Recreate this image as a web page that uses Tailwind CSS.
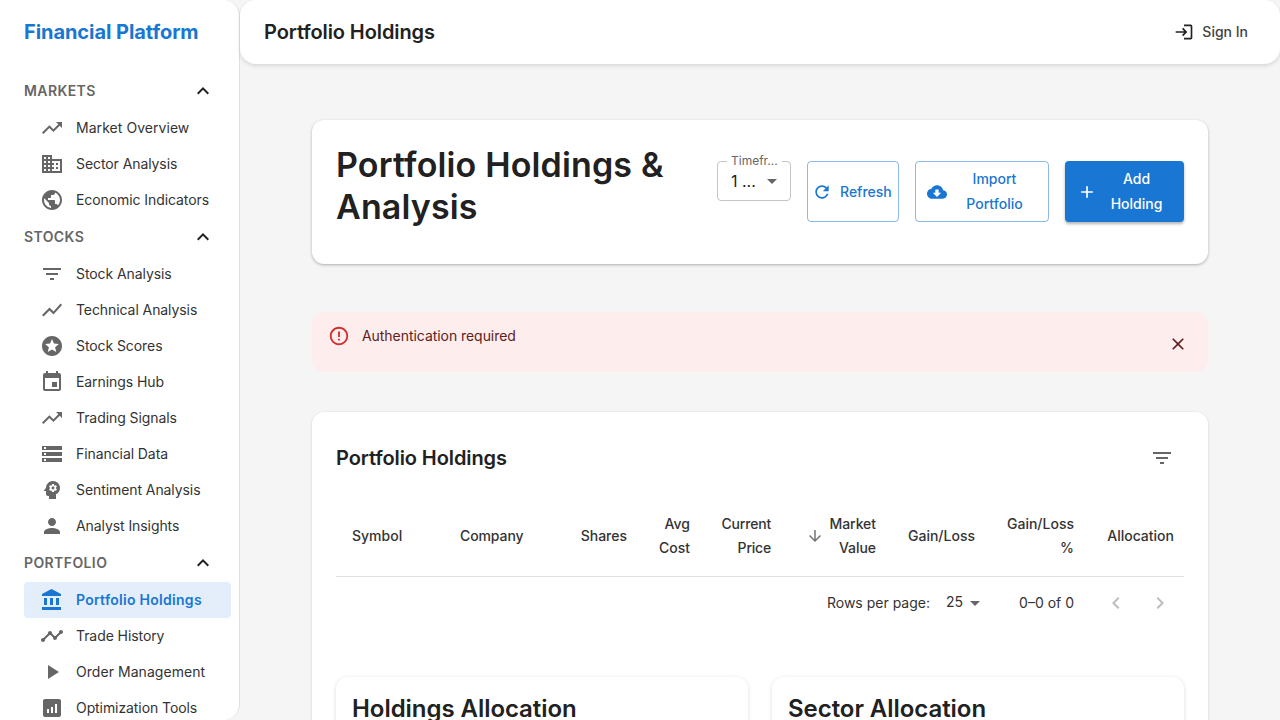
<!DOCTYPE html>
<html lang="en">
<head>
  <meta charset="UTF-8">
  <meta name="viewport" content="width=device-width, initial-scale=1.0">
  <title>Portfolio Holdings | Financial Platform</title>
  <script src="https://cdn.jsdelivr.net/npm/@tailwindcss/browser@4"></script>
</head>
<body class="bg-[#f5f5f5] h-screen overflow-hidden font-[Inter,sans-serif] text-[#212121]">
  <div class="flex h-screen overflow-hidden">
    <!-- Sidebar -->
    <aside class="w-[240px] shrink-0 h-[720px] bg-white rounded-r-2xl border-r border-[#e0e0e0] overflow-hidden">
      <div class="h-16 pl-6 flex items-center text-[20px] font-bold tracking-[-0.06px] text-[#1976d2]">Financial Platform</div>
      <nav class="mt-2 pl-6 pr-2 text-[14px] tracking-[-0.08px] text-[#333333]">
        <div class="h-[38px] flex items-center justify-between font-semibold tracking-[0.4px] text-[#666666]">
          <span class="mb-0.5">MARKETS</span>
          <svg class="w-6 h-6 mr-[16px] fill-[#212121]" viewBox="0 0 24 24"><path d="M12 8l-6 6 1.41 1.41L12 10.83l4.59 4.58L18 14z"/></svg>
        </div>
        <a class="h-9 flex items-center pl-4 gap-3 tracking-[0.05px]"><svg class="w-6 h-6 fill-[#666666]" viewBox="0 0 24 24"><path d="M16 6l2.29 2.29-4.88 4.88-4-4L2 16.59 3.41 18l6-6 4 4 6.3-6.29L22 12V6z"/></svg><span class="mb-0.5">Market Overview</span></a>
        <a class="h-9 flex items-center pl-4 gap-3"><svg class="w-6 h-6 fill-[#666666]" viewBox="0 0 24 24"><path d="M12 7V3H2v18h20V7H12zM6 19H4v-2h2v2zm0-4H4v-2h2v2zm0-4H4V9h2v2zm0-4H4V5h2v2zm4 12H8v-2h2v2zm0-4H8v-2h2v2zm0-4H8V9h2v2zm0-4H8V5h2v2zm10 12h-8v-2h2v-2h-2v-2h2v-2h-2V9h8v10zm-2-8h-2v2h2v-2zm0 4h-2v2h2v-2z"/></svg><span class="mb-0.5">Sector Analysis</span></a>
        <a class="h-9 flex items-center pl-4 gap-3"><svg class="w-6 h-6 fill-[#666666]" viewBox="0 0 24 24"><path d="M12 2C6.48 2 2 6.48 2 12s4.48 10 10 10 10-4.48 10-10S17.52 2 12 2zm-1 17.93c-3.95-.49-7-3.85-7-7.93 0-.62.08-1.21.21-1.79L9 15v1c0 1.1.9 2 2 2v1.93zm6.9-2.54c-.26-.81-1-1.39-1.9-1.39h-1v-3c0-.55-.45-1-1-1H8v-2h2c.55 0 1-.45 1-1V7h2c1.1 0 2-.9 2-2v-.41c2.93 1.19 5 4.06 5 7.41 0 2.08-.8 3.97-2.1 5.39z"/></svg><span class="mb-0.5">Economic Indicators</span></a>

        <div class="h-[38px] flex items-center justify-between font-semibold tracking-[0.4px] text-[#666666]">
          <span class="mb-0.5">STOCKS</span>
          <svg class="w-6 h-6 mr-[16px] fill-[#212121]" viewBox="0 0 24 24"><path d="M12 8l-6 6 1.41 1.41L12 10.83l4.59 4.58L18 14z"/></svg>
        </div>
        <a class="h-9 flex items-center pl-4 gap-3"><svg class="w-6 h-6 fill-[#666666]" viewBox="0 0 24 24"><path d="M10 18h4v-2h-4v2zM3 6v2h18V6H3zm3 7h12v-2H6v2z"/></svg><span class="mb-0.5">Stock Analysis</span></a>
        <a class="h-9 flex items-center pl-4 gap-3"><svg class="w-6 h-6 fill-[#666666]" viewBox="0 0 24 24"><path d="M3.5 18.49l6-6.01 4 4L22 6.92l-1.41-1.41-7.09 7.97-4-4L2 16.99z"/></svg><span class="mb-0.5">Technical Analysis</span></a>
        <a class="h-9 flex items-center pl-4 gap-3"><svg class="w-6 h-6 fill-[#666666]" viewBox="0 0 24 24"><path d="M11.99 2C6.47 2 2 6.48 2 12s4.47 10 9.99 10C17.52 22 22 17.52 22 12S17.52 2 11.99 2zm4.24 16L12 15.45 7.77 18l1.12-4.81-3.73-3.23 4.92-.42L12 5l1.92 4.53 4.92.42-3.73 3.23L16.23 18z"/></svg><span class="mb-0.5">Stock Scores</span></a>
        <a class="h-9 flex items-center pl-4 gap-3"><svg class="w-6 h-6 fill-[#666666]" viewBox="0 0 24 24"><path d="M17 12h-5v5h5v-5zM16 1v2H8V1H6v2H5c-1.11 0-1.99.9-1.99 2L3 19c0 1.1.89 2 2 2h14c1.1 0 2-.9 2-2V5c0-1.1-.9-2-2-2h-1V1h-2zm3 18H5V8h14v11z"/></svg><span class="mb-0.5">Earnings Hub</span></a>
        <a class="h-9 flex items-center pl-4 gap-3"><svg class="w-6 h-6 fill-[#666666]" viewBox="0 0 24 24"><path d="M16 6l2.29 2.29-4.88 4.88-4-4L2 16.59 3.41 18l6-6 4 4 6.3-6.29L22 12V6z"/></svg><span class="mb-0.5">Trading Signals</span></a>
        <a class="h-9 flex items-center pl-4 gap-3"><svg class="w-6 h-6 fill-[#666666]" viewBox="0 0 24 24"><path d="M2 20h20v-4H2v4zm2-3h2v2H4v-2zM2 4v4h20V4H2zm4 3H4V5h2v2zm-4 7h20v-4H2v4zm2-3h2v2H4v-2z"/></svg><span class="mb-0.5">Financial Data</span></a>
        <a class="h-9 flex items-center pl-4 gap-3"><svg class="w-6 h-6 fill-[#666666]" viewBox="0 0 24 24"><path d="M13 8.57c-.79 0-1.43.64-1.43 1.43s.64 1.43 1.43 1.43 1.43-.64 1.43-1.43-.64-1.43-1.43-1.43z"/><path d="M13 3C9.25 3 6.2 5.94 6.02 9.64L4.1 12.2c-.25.33-.01.8.4.8H6v3c0 1.1.9 2 2 2h1v3h7v-4.68c2.36-1.12 4-3.53 4-6.32 0-3.87-3.13-7-7-7zm3 7c0 .13-.01.26-.02.39l.83.66c.08.06.1.16.05.25l-.8 1.39c-.05.09-.16.12-.24.09l-.99-.4c-.21.16-.43.29-.67.39L14 13.83c-.01.1-.1.17-.2.17h-1.6c-.1 0-.18-.07-.2-.17l-.15-1.06c-.25-.1-.47-.23-.68-.39l-.99.4c-.09.03-.2 0-.25-.09l-.8-1.39c-.05-.08-.03-.19.05-.25l.84-.66c-.01-.13-.02-.26-.02-.39s.02-.27.04-.39l-.85-.66c-.08-.06-.1-.16-.05-.26l.8-1.38c.05-.09.15-.12.24-.09l1 .4c.2-.15.43-.29.67-.39l.15-1.06c.02-.1.1-.17.2-.17h1.6c.1 0 .18.07.2.17l.15 1.06c.24.1.46.23.67.39l1-.4c.09-.03.2 0 .24.09l.8 1.38c.05.09.03.2-.05.26l-.85.66c.03.12.04.25.04.39z"/></svg><span class="mb-0.5">Sentiment Analysis</span></a>
        <a class="h-9 flex items-center pl-4 gap-3"><svg class="w-6 h-6 fill-[#666666]" viewBox="0 0 24 24"><path d="M12 12c2.21 0 4-1.79 4-4s-1.79-4-4-4-4 1.79-4 4 1.79 4 4 4zm0 2c-2.67 0-8 1.34-8 4v2h16v-2c0-2.66-5.33-4-8-4z"/></svg><span class="mb-0.5">Analyst Insights</span></a>

        <div class="h-[38px] flex items-center justify-between font-semibold tracking-[0.4px] text-[#666666]">
          <span class="mb-0.5">PORTFOLIO</span>
          <svg class="w-6 h-6 mr-[16px] fill-[#212121]" viewBox="0 0 24 24"><path d="M12 8l-6 6 1.41 1.41L12 10.83l4.59 4.58L18 14z"/></svg>
        </div>
        <a class="h-9 flex items-center pl-4 gap-3 font-semibold tracking-[0.28px] text-[#1976d2] bg-[#e3eefa] rounded"><svg class="w-6 h-6 fill-[#1976d2]" viewBox="0 0 24 24"><path d="M4 10v7h3v-7H4zm6 0v7h3v-7h-3zM2 22h19v-3H2v3zm14-12v7h3v-7h-3zm-4.5-9L2 6v2h19V6l-9.5-5z"/></svg><span class="mb-0.5">Portfolio Holdings</span></a>
        <a class="h-9 flex items-center pl-4 gap-3"><svg class="w-6 h-6 fill-[#666666]" viewBox="0 0 24 24"><path d="M23 8c0 1.1-.9 2-2 2-.18 0-.35-.02-.51-.07l-3.56 3.55c.05.16.07.34.07.52 0 1.1-.9 2-2 2s-2-.9-2-2c0-.18.02-.36.07-.52l-2.55-2.55c-.16.05-.34.07-.52.07s-.36-.02-.52-.07l-4.55 4.56c.05.16.07.33.07.51 0 1.1-.9 2-2 2s-2-.9-2-2 .9-2 2-2c.18 0 .35.02.51.07l4.56-4.55C8.02 9.36 8 9.18 8 9c0-1.1.9-2 2-2s2 .9 2 2c0 .18-.02.36-.07.52l2.55 2.55c.16-.05.34-.07.52-.07s.36.02.52.07l3.55-3.56C19.02 8.35 19 8.18 19 8c0-1.1.9-2 2-2s2 .9 2 2z"/></svg><span class="mb-0.5">Trade History</span></a>
        <a class="h-9 flex items-center pl-4 gap-3 tracking-[0.05px]"><svg class="w-6 h-6 fill-[#666666]" viewBox="0 0 24 24"><path d="M8 5v14l11-7z"/></svg><span class="mb-0.5">Order Management</span></a>
        <a class="h-9 flex items-center pl-4 gap-3"><svg class="w-6 h-6 fill-[#666666]" viewBox="0 0 24 24"><path d="M19 3H5c-1.1 0-2 .9-2 2v14c0 1.1.9 2 2 2h14c1.1 0 2-.9 2-2V5c0-1.1-.9-2-2-2zM9 17H7v-4h2v4zm4 0h-2v-6h2v6zm4 0h-2V8h2v9z"/></svg><span class="mb-0.5">Optimization Tools</span></a>
      </nav>
    </aside>

    <div class="w-[1040px] h-[720px] flex flex-col">
      <!-- Top bar -->
      <header class="h-16 shrink-0 bg-white rounded-2xl shadow-[0_2px_4px_rgba(0,0,0,0.12)] flex items-center justify-between pl-6 pr-8">
        <div class="text-[20px] font-semibold tracking-[-0.1px]">Portfolio Holdings</div>
        <div class="flex items-center gap-2 text-[14px] font-medium text-[#424242]">
          <svg class="w-5 h-5 fill-[#212121]" viewBox="0 0 24 24"><path d="M11 7 9.6 8.4l2.6 2.6H2v2h10.2l-2.6 2.6L11 17l5-5-5-5zm9 12h-8v2h8c1.1 0 2-.9 2-2V5c0-1.1-.9-2-2-2h-8v2h8v14z"/></svg>
          <span class="mb-0.5">Sign In</span>
        </div>
      </header>

      <!-- Page content -->
      <main class="w-[896px] mx-auto pt-14">
        <section class="h-[144px] bg-white rounded-xl shadow-[0_1px_3px_rgba(0,0,0,0.3)] p-6 flex items-center justify-between">
          <h1 class="w-[381px] mb-3 text-[34px] leading-[42px] font-semibold tracking-[0.15px]">Portfolio Holdings &amp; Analysis</h1>
          <div class="flex items-start gap-4 mb-px text-[14px] font-medium leading-[25px]">
            <div class="relative w-[74px] h-10 border border-[#c4c4c4] rounded flex items-center justify-between pl-[13px] pr-[6px]">
              <span class="absolute left-[9px] top-[-8px] bg-white px-[4px] text-[12px] leading-[14px] font-normal text-[#666666]">Timefr...</span>
              <span class="text-[16px] font-normal">1 ...</span>
              <svg class="w-6 h-6 fill-[#666666]" viewBox="0 0 24 24"><path d="M7 10l5 5 5-5z"/></svg>
            </div>
            <button class="w-[92px] h-[61px] border border-[#1976d2]/50 rounded text-[#1976d2] flex items-center pl-[4px]">
              <svg class="w-5 h-5 mr-2 fill-[#1976d2]" viewBox="0 0 24 24"><path d="M17.65 6.35C16.2 4.9 14.21 4 12 4c-4.42 0-7.99 3.58-7.99 8s3.57 8 7.99 8c3.73 0 6.84-2.55 7.73-6h-2.08c-.82 2.33-3.04 4-5.65 4-3.31 0-6-2.69-6-6s2.69-6 6-6c1.66 0 3.14.69 4.22 1.78L13 11h7V4l-2.35 2.35z"/></svg>
              <span>Refresh</span>
            </button>
            <button class="w-[134px] h-[61px] border border-[#1976d2]/50 rounded text-[#1976d2] flex items-center pl-[11px] pr-[14px]">
              <svg class="w-5 h-5 mr-2 shrink-0 fill-[#1976d2]" viewBox="0 0 24 24"><path d="M19.35 10.04C18.67 6.59 15.64 4 12 4 9.11 4 6.6 5.64 5.35 8.04 2.34 8.36 0 10.91 0 14c0 3.31 2.69 6 6 6h13c2.76 0 5-2.24 5-5 0-2.64-2.05-4.78-4.65-4.96zM17 13l-5 5-5-5h3V9h4v4h3z"/></svg>
              <span class="flex-1 mb-0.5 text-center">Import Portfolio</span>
            </button>
            <button class="w-[119px] h-[61px] rounded bg-[#1976d2] text-white shadow-[0_2px_3px_rgba(0,0,0,0.3)] flex items-center pl-[12px] pr-[16px]">
              <svg class="w-5 h-5 mr-2 shrink-0 fill-white" viewBox="0 0 24 24"><path d="M19 13h-6v6h-2v-6H5v-2h6V5h2v6h6v2z"/></svg>
              <span class="flex-1 mb-0.5 text-center">Add Holding</span>
            </button>
          </div>
        </section>

        <div class="mt-12 h-[60px] bg-[#fdeded] rounded-xl flex justify-between pl-[16px] pr-[20px] text-[14px] tracking-[-0.05px] text-[#5f2120]">
          <div class="flex items-start gap-3 pt-[12px] leading-[24px]">
            <svg class="w-[22px] h-[22px] mt-px fill-[#d32f2f]" viewBox="0 0 24 24"><path d="M11 15h2v2h-2zm0-8h2v6h-2zm.99-5C6.47 2 2 6.48 2 12s4.47 10 9.99 10C17.52 22 22 17.52 22 12S17.52 2 11.99 2zM12 20c-4.42 0-8-3.58-8-8s3.58-8 8-8 8 3.58 8 8-3.58 8-8 8z"/></svg>
            Authentication required
          </div>
          <svg class="w-5 h-5 mt-[22px] fill-[#5f2120]" viewBox="0 0 24 24"><path d="M19 6.41 17.59 5 12 10.59 6.41 5 5 6.41 10.59 12 5 17.59 6.41 19 12 13.41 17.59 19 19 17.59 13.41 12z"/></svg>
        </div>

        <section class="mt-10 h-[400px] bg-white rounded-xl shadow-[0_0_0_1px_rgba(0,0,0,0.025),0_1px_3px_rgba(0,0,0,0.1)] px-6 pt-6">
          <div class="h-11 flex items-center justify-between pr-[10px]">
            <h2 class="text-[20px] font-semibold tracking-[-0.1px]">Portfolio Holdings</h2>
            <svg class="w-6 h-6 fill-[#666666]" viewBox="0 0 24 24"><path d="M10 18h4v-2h-4v2zM3 6v2h18V6H3zm3 7h12v-2H6v2z"/></svg>
          </div>
          <table class="mt-4 w-[848px] table-fixed text-[14px] leading-6 font-medium text-[#333333]">
            <thead>
              <tr class="h-20 border-b border-[#e0e0e0]">
                <th class="w-[108px] pl-4 text-left font-medium">Symbol</th>
                <th class="w-[121px] pl-4 text-left font-medium tracking-[-0.1px]">Company</th>
                <th class="w-[78px] pr-4 text-right font-medium">Shares</th>
                <th class="w-[63px] pr-4 text-right font-medium">Avg Cost</th>
                <th class="w-[81px] pr-4 text-right font-medium tracking-[-0.2px]">Current Price</th>
                <th class="w-[105px] pr-4 text-right font-medium">
                  <div class="flex items-center justify-end gap-[2px]">
                    <svg class="w-[18px] h-[18px] fill-[#757575]" viewBox="0 0 24 24"><path d="M20 12l-1.41-1.41L13 16.17V4h-2v12.17l-5.58-5.59L4 12l8 8 8-8z"/></svg>
                    <span class="w-[50px] tracking-[-0.05px]">Market Value</span>
                  </div>
                </th>
                <th class="w-[99px] pr-4 text-right font-medium">Gain/Loss</th>
                <th class="w-[99px] pr-4 text-right font-medium">Gain/Loss %</th>
                <th class="w-[94px] pr-[10px] text-right font-medium">Allocation</th>
              </tr>
            </thead>
          </table>
          <div class="h-[52px] flex items-center justify-end text-[14px] text-[#333333]">
            <span>Rows per page:</span>
            <span class="ml-4 mb-0.5">25</span>
            <svg class="w-6 h-6 fill-[#666666]" viewBox="0 0 24 24"><path d="M7 10l5 5 5-5z"/></svg>
            <span class="ml-[32px]">0–0 of 0</span>
            <div class="ml-[30px] mr-[12px] flex gap-5">
              <svg class="w-6 h-6 fill-[#bdbdbd]" viewBox="0 0 24 24"><path d="M15.41 16.59 10.83 12l4.58-4.59L14 6l-6 6 6 6 1.41-1.41z"/></svg>
              <svg class="w-6 h-6 fill-[#bdbdbd]" viewBox="0 0 24 24"><path d="M8.59 16.59 13.17 12 8.59 7.41 10 6l6 6-6 6-1.41-1.41z"/></svg>
            </div>
          </div>
          <div class="mt-[48px] grid grid-cols-2 gap-6">
            <div class="h-[200px] bg-white rounded-xl shadow-[0_1px_4px_rgba(0,0,0,0.14)] px-4 pt-4">
              <h3 class="text-[24px] leading-[32px] font-semibold tracking-[-0.05px]">Holdings Allocation</h3>
            </div>
            <div class="h-[200px] bg-white rounded-xl shadow-[0_1px_4px_rgba(0,0,0,0.14)] px-4 pt-4">
              <h3 class="text-[24px] leading-[32px] font-semibold tracking-[-0.05px]">Sector Allocation</h3>
            </div>
          </div>
        </section>
      </main>
    </div>
  </div>
</body>
</html>
